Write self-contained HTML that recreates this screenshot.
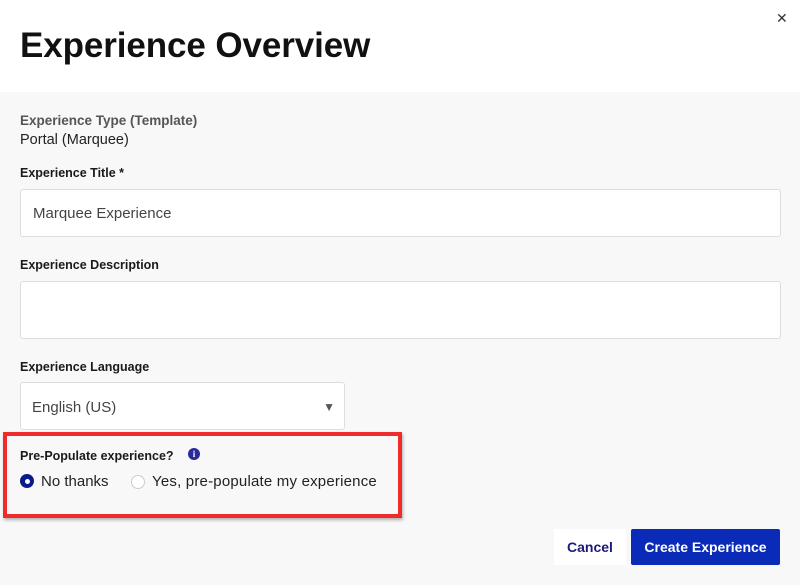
<!DOCTYPE html>
<html><head><style>
*{box-sizing:border-box;margin:0;padding:0}
body{width:800px;height:585px;overflow:hidden;font-family:"Liberation Sans",sans-serif;background:#f8f8f8;position:relative;color:#1a1a1a}
.hdr{position:absolute;left:0;top:0;width:800px;height:92px;background:#fff}
.hdr h1{position:absolute;left:20px;top:26px;font-size:35px;font-weight:bold;letter-spacing:-0.1px;color:#111}
.x{position:absolute;left:776px;top:10px;font-size:14px;color:#333}
.t{position:absolute;font-size:13px}
.lbl{position:absolute;left:20px;font-size:12.5px;font-weight:bold;color:#1a1a1a}
.inp{position:absolute;left:20px;background:#fff;border:1px solid #ddd;border-radius:3px;font-size:15px;color:#444;padding-left:12px}
.box{position:absolute;left:3px;top:432px;width:399px;height:86px;border:4px solid #ef2c2c;box-shadow:1px 2px 3px rgba(0,0,0,.3)}
.radio{position:absolute;width:14px;height:14px;border-radius:50%}
.btn{position:absolute;top:529px;height:36px;font-size:14px;font-weight:bold;display:flex;align-items:center;justify-content:center}
</style></head><body>
<div class="hdr"><h1>Experience Overview</h1><div class="x">✕</div></div>
<div class="t" style="left:20px;top:113px;font-weight:bold;color:#555;font-size:13.5px">Experience Type (Template)</div>
<div class="t" style="left:20px;top:132px;font-size:14.5px;color:#222">Portal (Marquee)</div>
<div class="lbl" style="top:166px">Experience Title *</div>
<div class="inp" style="top:189px;width:761px;height:48px;line-height:48px">Marquee Experience</div>
<div class="lbl" style="top:258px">Experience Description</div>
<div class="inp" style="top:281px;width:761px;height:58px"></div>
<div class="lbl" style="top:360px">Experience Language</div>
<div class="inp" style="top:382px;width:325px;height:48px;line-height:49px;padding-left:11px">English (US)<span style="position:absolute;right:9px;top:0;font-size:12px;color:#555">▼</span></div>
<div class="box"></div>
<div class="lbl" style="top:449px">Pre-Populate experience?</div>
<div style="position:absolute;left:188px;top:448px;width:12px;height:12px;border-radius:50%;background:#2a2a9a;color:#fff;font-size:9px;font-weight:bold;text-align:center;line-height:12px;font-family:'Liberation Serif',serif">i</div>
<div class="radio" style="left:20px;top:474px;background:#0b1a8a"><div style="position:absolute;left:4.5px;top:4.5px;width:5px;height:5px;border-radius:50%;background:#fff"></div></div>
<div class="t" style="left:41px;top:473px;font-size:15px;color:#222">No thanks</div>
<div class="radio" style="left:131px;top:475px;border:1px solid #ccc;background:#fff"></div>
<div class="t" style="left:152px;top:473px;font-size:15px;color:#222;letter-spacing:0.2px">Yes, pre-populate my experience</div>
<div class="btn" style="left:554px;width:72px;background:#fff;color:#1a1a7a">Cancel</div>
<div class="btn" style="left:631px;width:149px;background:#0a2bb8;color:#fff;border-radius:2px">Create Experience</div>
</body></html>
